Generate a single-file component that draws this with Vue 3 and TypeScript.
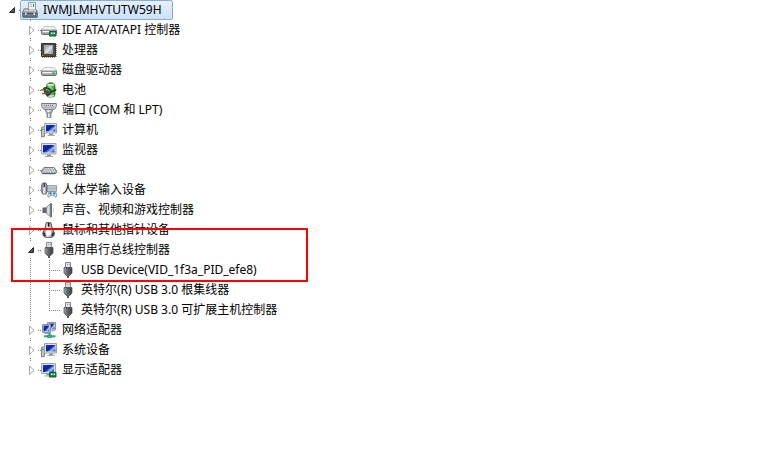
<script setup lang="ts">
import { reactive, ref } from 'vue'

interface Device {
  name: string
}

interface Category {
  id: string
  name: string
  icon: string
  open: boolean
  marked?: boolean
  devices: Device[]
}

const computerName = 'IWMJLMHVTUTW59H'
const rootOpen = ref(true)

const closed = (id: string, name: string, icon: string = id): Category => ({
  id,
  name,
  icon,
  open: false,
  devices: [],
})

const categories = reactive<Category[]>([
  closed('ide', 'IDE ATA/ATAPI 控制器'),
  closed('cpu', '处理器'),
  closed('disk', '磁盘驱动器'),
  closed('battery', '电池'),
  closed('port', '端口 (COM 和 LPT)'),
  closed('computer', '计算机'),
  closed('monitor', '监视器'),
  closed('keyboard', '键盘'),
  closed('hid', '人体学输入设备'),
  closed('sound', '声音、视频和游戏控制器'),
  closed('mouse', '鼠标和其他指针设备'),
  {
    id: 'usb',
    name: '通用串行总线控制器',
    icon: 'usb',
    open: true,
    marked: true,
    devices: [
      { name: 'USB Device(VID_1f3a_PID_efe8)' },
      { name: '英特尔(R) USB 3.0 根集线器' },
      { name: '英特尔(R) USB 3.0 可扩展主机控制器' },
    ],
  },
  closed('network', '网络适配器'),
  closed('system', '系统设备', 'computer'),
  closed('display', '显示适配器'),
])
</script>

<template>
  <svg class="sprite" aria-hidden="true">
    <defs>
      <linearGradient id="g-screen" x1="0" y1="0.1" x2="1" y2="0.9">
        <stop offset="0" stop-color="#1d33b8" />
        <stop offset="0.45" stop-color="#0a1c9c" />
        <stop offset="0.6" stop-color="#4f78e6" />
        <stop offset="0.72" stop-color="#a9c4fa" />
        <stop offset="1" stop-color="#1c3fcb" />
      </linearGradient>
      <linearGradient id="g-metal" x1="0" y1="0" x2="0" y2="1">
        <stop offset="0" stop-color="#eceeef" />
        <stop offset="1" stop-color="#85898d" />
      </linearGradient>
      <linearGradient id="g-side" x1="0" y1="0" x2="1" y2="0">
        <stop offset="0" stop-color="#6b7074" />
        <stop offset="0.4" stop-color="#f6f7f8" />
        <stop offset="1" stop-color="#7b8084" />
      </linearGradient>
      <linearGradient id="g-dark" x1="0" y1="0" x2="1" y2="0">
        <stop offset="0" stop-color="#85888d" />
        <stop offset="0.5" stop-color="#5f6267" />
        <stop offset="1" stop-color="#3c3e42" />
      </linearGradient>
      <linearGradient id="g-die" x1="0" y1="0" x2="1" y2="1">
        <stop offset="0" stop-color="#84898d" />
        <stop offset="0.5" stop-color="#dfe3e6" />
        <stop offset="1" stop-color="#8f9498" />
      </linearGradient>
      <linearGradient id="g-green" x1="0" y1="0" x2="1" y2="0">
        <stop offset="0" stop-color="#2c9c2a" />
        <stop offset="0.4" stop-color="#8fe878" />
        <stop offset="1" stop-color="#1b8a1d" />
      </linearGradient>
      <linearGradient id="g-base" x1="0" y1="0" x2="0" y2="1">
        <stop offset="0" stop-color="#a3adb6" />
        <stop offset="1" stop-color="#56616b" />
      </linearGradient>
    </defs>

    <symbol id="i-root" viewBox="0 0 16 16">
      <path d="M6.500.5h7v8h-7z" fill="#f1f3f4" stroke="#92999f" />
      <path d="M8 2.500h2M8 4.500h2" stroke="#b5bbc0" />
      <path d="M11 2h1v3h-1z" fill="#26a62f" />
      <path d="M2 6.500h4V9H2z" fill="#c9d0d5" stroke="#858d94" stroke-width=".7" />
      <path d="M1.500 8h13l1.300 2.500v4l-1 1H1.200l-1-1v-4z" fill="url(#g-base)" stroke="#56606a" stroke-width=".6" />
      <path d="M2 8.700h12" stroke="#dbe1e6" />
      <path d="M.7 11.500h14.600" stroke="#414c56" />
      <path d="M3 10.500h1.500V13H3zM11.500 10.500H13V13h-1.500z" fill="#d6dde2" />
    </symbol>

    <symbol id="i-disk" viewBox="0 0 16 16">
      <path d="M.5 9.300C1.300 6.800 2.700 5.700 4.500 5.600h7c1.800.1 3.200 1.200 4 3.700z" fill="#f7f7f8" stroke="#a0a4a7" stroke-width=".7" />
      <path d="M.5 9.200h15v2.900q0 1.400-1.400 1.400H1.900Q.5 13.500.5 12.100z" fill="url(#g-metal)" stroke="#62666a" stroke-width=".9" />
      <path d="M2 10.500h8" stroke="#fff" stroke-width=".8" />
      <path d="M11.500 10.500h2.500V12h-2.500z" fill="#18c422" />
    </symbol>

    <symbol id="i-ide" viewBox="0 0 16 16">
      <path d="M.5 8.300C1.300 5.800 2.700 4.700 4.500 4.600h7c1.800.1 3.200 1.200 4 3.700z" fill="#f7f7f8" stroke="#a0a4a7" stroke-width=".7" />
      <path d="M.5 8.200h15v2.900q0 1.400-1.400 1.400H1.900Q.5 12.500.5 11.100z" fill="url(#g-metal)" stroke="#62666a" stroke-width=".9" />
      <path d="M2 9.500h6" stroke="#fff" stroke-width=".8" />
      <path d="M8.500 9.500h6.500v4.500H8.500z" fill="#198c5a" stroke="#0c5c3b" />
      <path d="M10 10.500h1.500v1.500H10zM12.500 10.500H14v1.500h-1.500z" fill="#dff3e8" />
      <path d="M9 14.500h1M11 14.500h1M13 14.500h1" stroke="#b79c3a" />
    </symbol>

    <symbol id="i-cpu" viewBox="0 0 16 16">
      <path d="M1 15.500h14" stroke="#c09028" stroke-dasharray="1 1" />
      <path d="M15.500 2v13" stroke="#c09028" stroke-dasharray="1 1" />
      <path d="M.5 1.500h14v13H.5z" fill="#4b4d50" stroke="#303235" />
      <path d="M3.500 3.500h8v8h-8z" fill="url(#g-die)" stroke="#a9adb1" />
      <path d="M1 13.500h1" stroke="#d0a23c" />
    </symbol>

    <symbol id="i-battery" viewBox="0 0 16 16">
      <path d="M8 .5h3.500V2H8z" fill="#c9cccf" stroke="#75797d" stroke-width=".7" />
      <rect x="5.500" y="1.500" width="8.500" height="13.500" rx="2.600" fill="url(#g-green)" stroke="#277a28" stroke-width=".8" />
      <path d="M6.500 3.300q3.200-1.500 6.500 0" fill="none" stroke="#eefcec" stroke-width="1.300" />
      <path d="M7 13.600q3 1.300 6-.2" fill="none" stroke="#dcebdc" stroke-width="1.300" />
      <path d="M2.500 6 5 5.500q4.500.4 5.700 3.700-.5 3.600-4 4.500L4 11.700z" fill="#4a4d50" stroke="#1c1d1e" stroke-width=".8" />
      <path d="M0 8h3.500M1 11.500h3.500" stroke="#8d6f2a" stroke-width="1.400" />
      <path d="M10.300 9.500q3.500 0 4.700-2.500" fill="none" stroke="#2c2e30" stroke-width="1.600" />
      <path d="M5 7.500q2.300 0 3.600 1.700" fill="none" stroke="#a6aaad" />
    </symbol>

    <symbol id="i-port" viewBox="0 0 16 16">
      <path d="M.7 1.500h14.600v3l-1.800 2.800h-11L.7 4.500z" fill="#d3d6d8" stroke="#74797d" />
      <path d="M3 3.300h10M3.500 5h9" stroke="#565b5f" stroke-width=".9" stroke-dasharray="1 1" />
      <path d="M4 7.500h8L10.500 11h-5z" fill="url(#g-side)" stroke="#7b8084" stroke-width=".8" />
      <path d="M6 11h4v4.700H6z" fill="url(#g-side)" stroke="#7b8084" stroke-width=".8" />
    </symbol>

    <symbol id="i-computer" viewBox="0 0 16 16">
      <path d="M.5 5.500 3.500 4.500v10L.5 15z" fill="#bfc3c6" stroke="#6b7074" stroke-width=".8" />
      <path d="M1 7.500h1.500" stroke="#20b034" />
      <path d="M3.500 1.500h12v9.500h-12z" fill="#dfe2e5" stroke="#9ca1a5" />
      <path d="M5 3h9.500v6.500H5z" fill="url(#g-screen)" />
      <path d="M8 11.500h4v1.500H8z" fill="#8d9296" />
      <path d="M6.500 13.500H14" stroke="#a7abae" />
    </symbol>

    <symbol id="i-monitor" viewBox="0 0 16 16">
      <path d="M.5 1.500h14.500v10.500H.5z" fill="#dfe2e5" stroke="#a0a5a9" />
      <path d="M2 3h11.500v7.500H2z" fill="url(#g-screen)" />
      <path d="M6 12.500h4V14H6z" fill="#8d9296" />
      <path d="M3.500 14.500H12" stroke="#a4a8ac" />
    </symbol>

    <symbol id="i-keyboard" viewBox="0 0 16 16">
      <path d="M3 5.500h10l2.500 3.200v1.500L14 11.800H2L.5 10.200V8.700z" fill="#9fa3a7" stroke="#6a6e72" stroke-width=".9" />
      <path d="M3.500 6.700h9.500M2.500 8.200h11.500M2 9.700h12.500" stroke="#f0f1f2" stroke-width=".9" stroke-dasharray="1.200 .5" />
      <path d="M1.500 11.500h13" stroke="#54585c" stroke-width=".7" />
    </symbol>

    <symbol id="i-hid" viewBox="0 0 16 16">
      <path d="M6 3.500h9.500v6H6z" fill="#d5d8da" stroke="#8b9094" stroke-width=".8" />
      <path d="M6.500 5h9M6.500 6.500h9M6.500 8h9" stroke="#73787c" stroke-width=".8" stroke-dasharray="1 1" />
      <rect x=".8" y=".8" width="5" height="11.500" rx="2.300" fill="url(#g-side)" stroke="#54585c" stroke-width=".9" />
      <path d="M3.200 1.200v4" stroke="#1f2123" stroke-width="1.300" />
      <path d="M7.500 15.300q-1-.2-.5-3 .4-2.300 2-2.500h4.500q1.600.2 2 2.500.4 2.800-.5 3-.8 0-2-2H9.500q-1.200 2-2 2z" fill="#d5e4ee" stroke="#6b7f8e" stroke-width=".8" />
      <path d="M8.300 11.500h2.400M9.500 10.300v2.400" stroke="#1d6fb5" />
      <circle cx="13.200" cy="11.600" r="1" fill="#1d6fb5" />
    </symbol>

    <symbol id="i-sound" viewBox="0 0 16 16">
      <path d="M1.500 5.500h4v5.500h-4z" fill="#5f6569" />
      <path d="M5 5.700 10 1.200v14.100l-5-4.500z" fill="url(#g-side)" stroke="#6f7478" stroke-width=".8" />
      <path d="M10.300 1.500v13.500" stroke="#54595d" />
      <path d="M12 6q1.200 2.200 0 4.400" fill="none" stroke="#a9d4ec" />
    </symbol>

    <symbol id="i-mouse" viewBox="0 0 16 16">
      <path d="M5.300.7h4.500l1.300 5 2.300 5.300q.3 3.500-2.600 4.300H4.400q-2.900-.8-2.600-4.300l2.300-5.300z" fill="url(#g-side)" stroke="#3c3f42" stroke-width=".9" />
      <path d="M7.600 1v3.700" stroke="#17181a" stroke-width="1.700" />
      <path d="M4.300 6q3.300 2 6.600 0" fill="none" stroke="#3c3f42" stroke-width="1.300" />
      <path d="M2.700 10.500 4.300 14M12.500 10.500 10.900 14" stroke="#303336" stroke-width="1.800" />
      <ellipse cx="7.600" cy="10.700" rx="2.500" ry="2.600" fill="#fff" />
    </symbol>

    <symbol id="i-usb" viewBox="0 0 16 16">
      <path d="M5.500.5h5v5h-5z" fill="#dcdee0" stroke="#878b8f" />
      <path d="M7 2.500h.5M9 2.500h.5" stroke="#6b6f73" />
      <path d="M4 5.500h8V11l-2.200 2.500H6.200L4 11z" fill="url(#g-dark)" stroke="#4b4e52" stroke-width=".7" />
      <path d="M5 6.300v4.500" stroke="#abaeb2" stroke-width=".7" />
      <path d="M8 13.500V16" stroke="#54575b" stroke-width="2" />
    </symbol>

    <symbol id="i-network" viewBox="0 0 16 16">
      <path d="M6.500.5h8v7.500h-8z" fill="#e1e5e9" stroke="#8d9498" />
      <path d="M7.500 1.500h6V7h-6z" fill="url(#g-screen)" />
      <path d="M1.500 2.500h8v8h-8z" fill="#eef0f2" stroke="#8d9498" />
      <path d="M2.500 3.500h6v6h-6z" fill="url(#g-screen)" />
      <path d="M3.500 11.500h4M10.500 9h3" stroke="#9da1a4" />
      <path d="M8.500 11v3" stroke="#1f9e68" stroke-width="2" />
      <path d="M3 14.300h11.500" stroke="#27b277" stroke-width="2" />
      <path d="M6.500 13.300h4v2.200h-4z" fill="#3dbf83" stroke="#148554" stroke-width=".6" />
    </symbol>

    <symbol id="i-display" viewBox="0 0 16 16">
      <path d="M.5 1.500h14v10H.5z" fill="#dfe2e5" stroke="#a0a5a9" />
      <path d="M2 3h11v7H2z" fill="url(#g-screen)" />
      <path d="M3.500 14H9" stroke="#a4a8ac" />
      <path d="M5.500 12H8v1.500H5.500z" fill="#8d9296" />
      <path d="M8.500 10.500h6.500V15H8.500z" fill="#198c5a" stroke="#0c5c3b" />
      <path d="M10 11.500h1.500V13H10zM12.500 11.500H14V13h-1.500z" fill="#dff3e8" />
      <path d="M9 15.500h1M11 15.500h1M13 15.500h1" stroke="#b79c3a" />
    </symbol>

    <symbol id="a-closed" viewBox="0 0 14 16">
      <path d="M5.500 4v8.500l4.500-4.250z" fill="#fff" stroke="#a6a6a6" />
    </symbol>
    <symbol id="a-open" viewBox="0 0 14 16">
      <path d="M9.500 5.500v5h-5z" fill="#595959" stroke="#262626" />
    </symbol>
  </svg>

  <main class="manager">
    <div class="row root">
      <button class="toggle" type="button" :aria-expanded="rootOpen" :aria-label="computerName" @click="rootOpen = !rootOpen">
        <svg class="arrow"><use :href="rootOpen ? '#a-open' : '#a-closed'" /></svg>
      </button>
      <span class="connector"></span>
      <span class="label selected">
        <svg class="icon"><use href="#i-root" /></svg>
        <span>{{ computerName }}</span>
      </span>
    </div>

    <ul v-if="rootOpen" class="categories">
      <li v-for="category in categories" :key="category.id" :class="{ marked: category.marked }">
        <div class="row">
          <button class="toggle" type="button" :aria-expanded="category.open" :aria-label="category.name" @click="category.open = !category.open">
            <svg class="arrow"><use :href="category.open ? '#a-open' : '#a-closed'" /></svg>
          </button>
          <span class="connector"></span>
          <span class="label">
            <svg class="icon"><use :href="`#i-${category.icon}`" /></svg>
            <span>{{ category.name }}</span>
          </span>
        </div>
        <ul v-if="category.open" class="devices">
          <li v-for="device in category.devices" :key="device.name" class="row">
            <span class="connector"></span>
            <span class="label">
              <svg class="icon"><use href="#i-usb" /></svg>
              <span>{{ device.name }}</span>
            </span>
          </li>
        </ul>
      </li>
    </ul>
  </main>
</template>

<style>
body {
  background: #fff;
}
</style>

<style scoped>
.sprite {
  position: absolute;
  width: 0;
  height: 0;
}

.manager {
  color: #000;
  font-family: "Noto Sans", "Noto Sans CJK SC", sans-serif;
  font-size: 12px;
  line-height: 18px;
  white-space: nowrap;
}

ul {
  margin: 0;
  padding: 0;
  list-style: none;
}

.row {
  display: flex;
  align-items: center;
  height: 20px;
  padding-left: 24px;
}

.root {
  padding-left: 5px;
}

.toggle {
  display: block;
  width: 14px;
  height: 16px;
  padding: 0;
  border: 0;
  background: #fff;
  cursor: pointer;
}

.arrow {
  display: block;
  width: 14px;
  height: 16px;
}

.connector {
  width: 3px;
  height: 1px;
  background: repeating-linear-gradient(to right, #808080 0 1px, transparent 1px 2px);
}

.root .connector {
  width: 1px;
}

.label {
  display: flex;
  align-items: center;
  gap: 5px;
}

.selected {
  box-sizing: border-box;
  height: 20px;
  padding: 0 10px 0 1px;
  border: 1px solid #84acdd;
  border-radius: 2px;
  background: linear-gradient(#e6f1fd, #cbe1fc);
}

.icon {
  flex: none;
  width: 16px;
  height: 16px;
}

.categories {
  background: repeating-linear-gradient(#808080 0 1px, transparent 1px 2px) 30px 0 / 1px calc(100% - 10px) no-repeat;
}

.devices {
  background: repeating-linear-gradient(#808080 0 1px, transparent 1px 2px) 49px 0 / 1px calc(100% - 10px) no-repeat;
}

.devices .row {
  padding-left: 49px;
}

.devices .connector {
  width: 11px;
}

.marked {
  position: relative;
}

/* Highlight frame drawn over the category and its first device */
.marked::after {
  content: "";
  position: absolute;
  top: -12px;
  left: 11px;
  box-sizing: border-box;
  width: 297px;
  height: 54px;
  border: 2px solid #f00;
  pointer-events: none;
}
</style>
